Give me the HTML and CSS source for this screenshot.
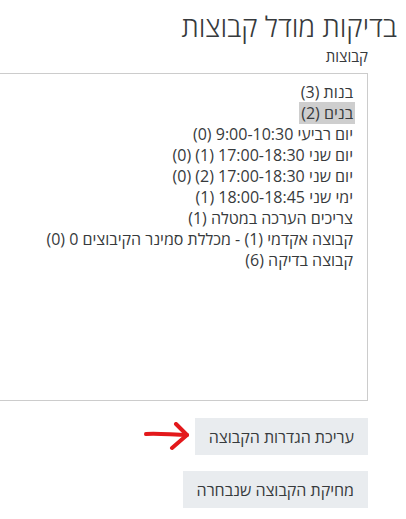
FILE: index.html
```html
<!DOCTYPE html>
<html lang="he" dir="rtl">
<head>
  <meta charset="UTF-8">
  <meta name="viewport" content="width=device-width, initial-scale=1.0">
  <title>בדיקות מודל קבוצות</title>
  <link rel="stylesheet" href="styles.css">
</head>
<body>
  <div class="page">
    <h2 class="page-title">בדיקות מודל קבוצות</h2>
    <div class="groups">
      <div class="groups-label">קבוצות</div>
      <div class="group-list">
        <div class="group-item"><span>בנות (3)</span></div>
        <div class="group-item"><span class="selected">בנים (2)</span></div>
        <div class="group-item"><span>יום רביעי 9:00-10:30 (0)</span></div>
        <div class="group-item"><span>יום שני 17:00-18:30 (1) (0)</span></div>
        <div class="group-item"><span>יום שני 17:00-18:30 (2) (0)</span></div>
        <div class="group-item"><span>ימי שני 18:00-18:45 (1)</span></div>
        <div class="group-item"><span>צריכים הערכה במטלה (1)</span></div>
        <div class="group-item"><span>קבוצה אקדמי (1) - מכללת סמינר הקיבוצים 0 (0)</span></div>
        <div class="group-item"><span>קבוצה בדיקה (6)</span></div>
      </div>
    </div>
    <div class="actions">
      <div class="action-row">
        <button class="btn">עריכת הגדרות הקבוצה</button>
        <svg class="arrow" width="48" height="30" viewBox="0 0 48 30">
          <path d="M3 12 C 16 11, 30 13, 44 13" />
          <path d="M33 2 L44 13 L29 26" />
        </svg>
      </div>
      <div class="action-row">
        <button class="btn">מחיקת הקבוצה שנבחרה</button>
      </div>
    </div>
  </div>
</body>
</html>
```

FILE: styles.css
```css
html, body {
  margin: 0;
  padding: 0;
  overflow: hidden;
}

body {
  font-family: 'Open Sans', 'Liberation Sans', sans-serif;
  color: #373a3c;
  background-color: white;
}

.page {
  width: 368px;
  margin-right: 38px;
  padding-top: 8px;
}

.page-title {
  margin: 0 -29px 0 0;
  font-size: 28px;
  font-weight: 300;
  line-height: 36px;
}

.groups-label {
  font-size: 15px;
  line-height: 20px;
  margin-top: 2px;
  margin-bottom: 7px;
}

.group-list {
  box-sizing: border-box;
  width: 368px;
  height: 328px;
  border: 1px solid #ccc;
  border-left: none;
  padding: 8px 12px;
  font-size: 16px;
  line-height: 21px;
}

.group-item span {
  padding: 0 2px;
  white-space: nowrap;
}

.group-item .selected {
  background-color: #cecece;
}

.actions {
  margin-top: 17px;
}

.action-row {
  display: flex;
  align-items: center;
  gap: 4px;
  margin-bottom: 16px;
}

.btn {
  font-family: inherit;
  font-size: 16px;
  color: #373a3c;
  background-color: #e9ecef;
  border: none;
  padding: 0 14px;
  height: 37px;
}

.arrow path {
  fill: none;
  stroke: #e3181b;
  stroke-width: 4;
  stroke-linecap: round;
  stroke-linejoin: round;
}
```
